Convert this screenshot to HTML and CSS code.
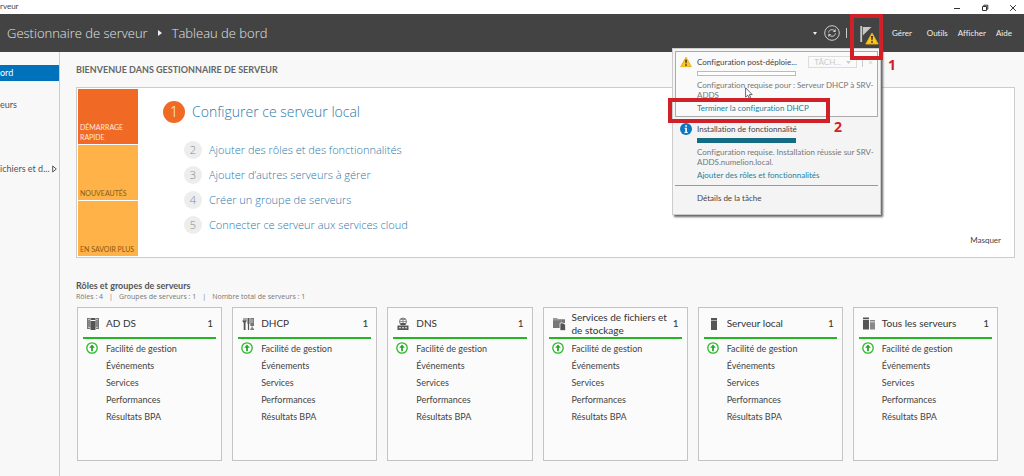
FILE: index.html
```
<!DOCTYPE html>
<html lang="fr">
<head>
<meta charset="utf-8">
<title>Gestionnaire de serveur</title>
<link rel="stylesheet" href="styles.css">
</head>
<body>
<svg class="defs" aria-hidden="true">
  <symbol id="warning" viewBox="0 0 14 13"><path d="M7 1 13.2 12H.8Z" fill="#fdc921" stroke="#e3a712" stroke-linejoin="round"/><path d="M6.1 4h1.8l-.4 4.3h-1zM6.2 9.2h1.6v1.6H6.2z" fill="#222"/></symbol>
  <symbol id="up" viewBox="0 0 12 12"><circle cx="6" cy="6" r="5.2" fill="#fff" stroke="#27b827" stroke-width="1.3"/><path d="M6 2.6 8.9 5.8H6.9V9.3H5.1V5.8H3.1Z" fill="#27a827"/></symbol>
</svg>
<div class="titlebar">
  <span class="titlebar-text">rveur</span>
  <div class="window-buttons">
    <button aria-label="Réduire"><svg viewBox="0 0 8 8"><path d="M1 4.5h6"/></svg></button>
    <button aria-label="Restaurer"><svg viewBox="0 0 8 8"><path d="M1.5 2.5h4v4h-4zM2.8 2.2V1.2h4v4H5.8"/></svg></button>
    <button aria-label="Fermer"><svg viewBox="0 0 8 8"><path d="m1.2 1.2 5.6 5.6m0-5.6L1.2 6.8"/></svg></button>
  </div>
</div>
<header class="header">
  <h1 class="crumbs"><span>Gestionnaire de serveur</span><svg class="crumb-arrow" viewBox="0 0 4 6"><path d="M0 0 4 3 0 6Z"/></svg><span>Tableau de bord</span></h1>
  <div class="tools">
    <svg class="caret" viewBox="0 0 4 3"><path d="M0 0h4L2 3Z"/></svg>
    <button class="refresh" aria-label="Actualiser"><svg viewBox="0 0 16 16"><circle cx="8" cy="8" r="7.3"/><path d="M4.6 7.6C4.8 5.6 6.2 4.7 8 4.7c1.2 0 2 .4 2.7 1.2M11.4 8.4c-.2 2-1.6 2.9-3.4 2.9-1.2 0-2-.4-2.7-1.2"/><path class="heads" d="M11.7 3.8v3.1H8.8zM4.3 12.2V9.1h2.9z"/></svg></button>
    <span class="separator"></span>
    <button class="flag" aria-label="Notifications"><svg class="flag-icon" viewBox="0 0 12 16"><path d="M.3 0h1.8v16H.3z"/><path d="M2.8 1h8.700L2.800 9.500Z"/></svg><svg class="flag-warning"><use href="#warning"/></svg></button>
  </div>
  <nav class="menu"><button>Gérer</button><button>Outils</button><button>Afficher</button><button>Aide</button></nav>

  <section class="popup" aria-label="Notifications">
    <div class="task task-current">
      <svg class="task-icon" viewBox="0 0 14 13"><use href="#warning"/></svg>
      <div class="task-body">
        <div class="task-head"><h2>Configuration post-déploie...</h2>
          <div class="task-actions"><button class="task-menu" disabled>TÂCH...<svg viewBox="0 0 5 3"><path d="M0 0h5L2.500 3Z"/></svg></button><span class="task-sep"></span><button class="task-close" disabled aria-label="Fermer">×</button></div>
        </div>
        <div class="bar"></div>
        <p>Configuration requise pour : Serveur DHCP à SRV-<br>ADDS</p>
        <a href="#">Terminer la configuration DHCP</a>
      </div>
    </div>
    <div class="task task-done">
      <svg class="task-icon" viewBox="0 0 12 12"><circle cx="6" cy="6" r="6" fill="#0a78c4"/><path d="M5.200 2.200h1.700v1.600H5.200zM4.600 4.800h2.300v4.200h.8v.9H4.500V9h.8V5.700h-.7z" fill="#fff"/></svg>
      <div class="task-body">
        <h2>Installation de fonctionnalité</h2>
        <div class="bar bar-full"></div>
        <p>Configuration requise. Installation réussie sur SRV-<br>ADDS.numelion.local.</p>
        <a href="#">Ajouter des rôles et fonctionnalités</a>
      </div>
    </div>
    <button class="details">Détails de la tâche</button>
    <svg class="cursor" viewBox="0 0 8 12"><path d="M.6.8v9.400l2.200-2 1.400 3.100 1.500-.7-1.400-3h2.900z" fill="#fff" stroke="#444" stroke-width=".8"/></svg>
    <div class="callout callout-link"></div>
    <strong class="step step-link">2</strong>
  </section>
  <div class="callout callout-flag"></div>
  <strong class="step step-flag">1</strong>
</header>
<div class="layout">
  <aside class="sidebar">
    <a class="side-link selected" href="#">ord</a>
    <a class="side-link" href="#">eurs</a>
    <a class="side-link side-files" href="#">ichiers et d...<svg viewBox="0 0 5 8"><path d="M.7 1 4.300 4 .7 7Z"/></svg></a>
  </aside>
  <main class="main">
    <h2 class="welcome">BIENVENUE DANS GESTIONNAIRE DE SERVEUR</h2>
    <section class="banner">
      <div class="tiles"><button class="tile tile-active">DÉMARRAGE RAPIDE</button><button class="tile">NOUVEAUTÉS</button><button class="tile">EN SAVOIR PLUS</button></div>
      <div class="steps">
        <a class="primary" href="#"><span class="number">1</span>Configurer ce serveur local</a>
        <a class="secondary" href="#"><span class="number">2</span>Ajouter des rôles et des fonctionnalités</a>
        <a class="secondary" href="#"><span class="number">3</span>Ajouter d’autres serveurs à gérer</a>
        <a class="secondary" href="#"><span class="number">4</span>Créer un groupe de serveurs</a>
        <a class="secondary" href="#"><span class="number">5</span>Connecter ce serveur aux services cloud</a>
      </div>
      <button class="hide">Masquer</button>
    </section>
    <h2 class="groups-title">Rôles et groupes de serveurs</h2>
    <p class="groups-info"><span>Rôles : 4</span><span>|</span><span>Groupes de serveurs : 1</span><span>|</span><span>Nombre total de serveurs : 1</span></p>
    <div class="cards">
      <article class="card"><header class="card-head"><svg viewBox="0 0 14 14"><path d="M1 1h3v1H2v9h2v1H1zM13 1h-3v1h2v9h-2v1h3z" fill="#777"/><path d="M2 2.500h2.500v8H2zM9.500 2.500H12v8H9.500z" fill="#888"/><path d="M4.500 1h5v2h-5zM4.500 4h5v9h-5z"/></svg><h3>AD DS</h3><span>1</span></header>
        <ul><li class="ok"><svg><use href="#up"/></svg>Facilité de gestion</li><li>Événements</li><li>Services</li><li>Performances</li><li>Résultats BPA</li></ul></article>
      <article class="card"><header class="card-head"><svg viewBox="0 0 14 14"><path d="M1.500 1v2.500h1V1h1v2.500h1V1h1v3.500l-1 1.200V13H2.700V5.700L1.500 4.500zM6.500 1h2v6h-.4v6H6.900V7h-.4z"/><path d="M9.300 1H13v8H9.300zM10.500 9.500h1.300v2H13V13H9.300v-1.500h1.200z" fill="#777"/><path d="M10 3h2.300M10 5h2.300" stroke="#fff" stroke-width=".6"/></svg><h3>DHCP</h3><span>1</span></header>
        <ul><li class="ok"><svg><use href="#up"/></svg>Facilité de gestion</li><li>Événements</li><li>Services</li><li>Performances</li><li>Résultats BPA</li></ul></article>
      <article class="card"><header class="card-head"><svg viewBox="0 0 14 14"><circle cx="7" cy="4.500" r="3.500" fill="none" stroke="#777"/><path d="M3.500 4.500h7M7 1v7M4.500 2.500h5" stroke="#777" stroke-width=".8"/><path d="M4.500 6h5v2h-5zM1.500 8.500h11V13h-11z"/><path d="M3 10.800h2m1 0h2m1 0h2" stroke="#eee" stroke-width="1.100"/></svg><h3>DNS</h3><span>1</span></header>
        <ul><li class="ok"><svg><use href="#up"/></svg>Facilité de gestion</li><li>Événements</li><li>Services</li><li>Performances</li><li>Résultats BPA</li></ul></article>
      <article class="card"><header class="card-head"><svg viewBox="0 0 14 14"><path d="M1 1h4l1 1h7v4H1z" fill="#999"/><path d="M1 3.500h8V11H1zM9.500 3h3.500v3H9.500z" fill="#777"/><path d="M8 6h3.500L13.500 8v5.500H8z" stroke="#fff" stroke-width=".7"/></svg><h3>Services de fichiers et de stockage</h3><span>1</span></header>
        <ul><li class="ok"><svg><use href="#up"/></svg>Facilité de gestion</li><li>Événements</li><li>Services</li><li>Performances</li><li>Résultats BPA</li></ul></article>
      <article class="card"><header class="card-head"><svg viewBox="0 0 14 14"><path d="M4 1h6v2H4zM4 4h6v9H4z"/><path d="M4 3h6v1H4z" fill="#aaa"/></svg><h3>Serveur local</h3><span>1</span></header>
        <ul><li class="ok"><svg><use href="#up"/></svg>Facilité de gestion</li><li>Événements</li><li>Services</li><li>Performances</li><li>Résultats BPA</li></ul></article>
      <article class="card"><header class="card-head"><svg viewBox="0 0 14 14"><path d="M1 .500h6v1.800H1zM1 3h6v9.500H1z"/><path d="M8 3h5v1.500H8zM8 5.200h5v7.300H8z" fill="#888"/></svg><h3>Tous les serveurs</h3><span>1</span></header>
        <ul><li class="ok"><svg><use href="#up"/></svg>Facilité de gestion</li><li>Événements</li><li>Services</li><li>Performances</li><li>Résultats BPA</li></ul></article>
    </div>
  </main>
</div>
</body>
</html>
```

FILE: styles.css
```
* { box-sizing: border-box; }
body { margin: 0; min-height: 100vh; display: flex; flex-direction: column; background: #f8f8f8; color: #444; font-family: Lato, "Open Sans", sans-serif; font-size: 8px; line-height: 12px; font-variant-ligatures: none; }
h1, h2, h3, p, ul { margin: 0; padding: 0; font-size: inherit; font-weight: 400; }
ul { list-style: none; }
button { border: 0; padding: 0; background: none; color: inherit; font: inherit; }
a { color: #1c7f9c; text-decoration: none; }
svg { display: block; flex: none; }
.defs { position: absolute; width: 0; height: 0; }

.titlebar { display: flex; justify-content: space-between; height: 14px; background: #fff; }
.window-buttons { display: flex; gap: 20px; padding: 2px 7px 0 0; }
.window-buttons svg { width: 8px; height: 8px; fill: none; stroke: #333; stroke-width: 1; }

.header { position: relative; display: flex; align-items: center; height: 38px; padding: 0 12px 0 7px; background: #434343; color: #f0f0f0; }
.crumbs { display: flex; align-items: center; flex: 1; gap: 10px; font-family: "Open Sans", "Noto Sans", sans-serif; font-size: 13px; font-weight: 300; line-height: 20px; color: #e4e4e4; }
.crumb-arrow { width: 4px; height: 6px; fill: #eee; }
.tools { display: flex; align-items: center; }
.caret { width: 4px; height: 3px; margin-right: 7px; fill: #eee; }
.refresh svg { width: 16px; height: 16px; fill: none; stroke: #ccc; }
.refresh .heads { fill: #ccc; stroke: none; }
.separator { width: 1px; height: 10px; margin: 0 13px 0 6px; background: #ccc; }
.flag { display: block; position: relative; width: 19px; height: 22px; margin-top: 2px; }
.flag-icon { width: 12px; height: 16px; fill: #c8c8c8; }
.flag-warning { position: absolute; right: 0; bottom: 0; width: 14px; height: 13px; }
.menu { display: flex; gap: 10px; margin-left: 13px; }
.menu button:first-child { margin-right: 5px; }

.popup { position: absolute; z-index: 1; top: 34px; right: 143px; width: 209px; padding: 2px 2px 10px; border: 1px solid #ccc; background: #f4f4f4; color: #444; box-shadow: 2px 2px 2px #666; }
.task { display: flex; gap: 5px; padding: 4px 5px; }
.task-current { padding: 4px 4px 2px; border: 1px solid #aaa; background: #fafafa; }
.task-done { padding: 6px 5px 4px; border-bottom: 1px solid #999; }
.task-icon { width: 12px; height: 12px; }
.task-body { flex: 1; min-width: 0; }
.task-body p { margin: 4px 0 2px; line-height: 10px; color: #777; white-space: nowrap; }
.task-body a { display: block; }
.task-current h2 { white-space: nowrap; }
.task-head { display: flex; justify-content: space-between; }
.task-actions { display: flex; align-items: center; gap: 5px; color: #ccc; }
.task-menu { display: flex; align-items: center; justify-content: space-between; width: 49px; height: 12px; padding: 0 5px; border: 1px solid #ddd; }
.task-menu svg { width: 5px; height: 3px; fill: #ccc; }
.task-sep { width: 1px; height: 10px; background: #ccc; }
.bar { width: 99px; height: 5px; margin-top: 3px; border: 1px solid #bbb; background: #fff; }
.bar-full { border-color: #146c84; background: #146c84; }
.details { display: block; margin: 6px 0 0 22px; }
.cursor { position: absolute; top: 38px; left: 72px; width: 8px; height: 12px; }
.callout { position: absolute; z-index: 2; border: 4px solid #d02028; }
.callout-link { top: 49px; left: -5px; width: 162px; height: 25px; }
.callout-flag { top: 0; right: 141px; width: 33px; height: 46px; }
.step { position: absolute; z-index: 2; color: #d02028; font-family: "Open Sans", "Noto Sans", sans-serif; font-size: 14px; font-weight: 700; line-height: 16px; }
.step-link { top: 70px; left: 161px; }
.step-flag { top: 43px; right: 128px; }

.layout { display: flex; flex: 1; }
.sidebar { width: 60px; flex: none; padding-top: 13px; border-right: 1px solid #ccc; }
.side-link { display: flex; align-items: center; justify-content: space-between; height: 16px; margin-bottom: 16px; color: #555; font-size: 9px; }
.selected { background: #0072bc; color: #fff; }
.side-files { margin-top: 48px; padding-right: 2px; white-space: nowrap; }
.side-files svg { width: 5px; height: 8px; fill: none; stroke: #555; }

.main { flex: 1; min-width: 0; padding: 12px 9px 14px 16px; }
.welcome { color: #666; font-size: 9px; font-weight: 700; }
.banner { display: flex; margin-top: 11px; padding: 1px; border: 1px solid #ccc; background: #fff; }
.tiles { display: grid; grid-template: repeat(3, 55px) / 60px; gap: 1px; }
.tile { display: flex; align-items: flex-end; padding: 0 2px 2px; background: #ffb247; color: #8a5a14; font-size: 7px; line-height: 10px; text-align: left; white-space: nowrap; }
.tile-active { background: #f06a26; color: #ffe9dc; white-space: normal; }
.steps { flex: 1; padding: 12px 0 0 25px; font-family: "Open Sans", "Noto Sans", sans-serif; font-weight: 300; }
.steps a { display: flex; align-items: center; color: #2c78aa; }
.number { display: flex; align-items: center; justify-content: center; border-radius: 50%; }
.primary { gap: 7px; margin-bottom: 18px; font-size: 14px; line-height: 22px; }
.primary .number { width: 22px; height: 22px; background: #f06a26; color: #fff; }
.secondary { gap: 7px; height: 18px; margin: 0 0 7px 21px; font-size: 11px; }
.secondary:last-child { margin-bottom: 0; }
.secondary .number { width: 18px; height: 18px; background: #ededed; color: #888; }
.hide { align-self: flex-end; margin: 0 12px 10px 0; }

.groups-title { margin-top: 22px; color: #555; font-size: 9px; font-weight: 700; }
.groups-info { display: flex; gap: 6px; color: #777; font-family: "Open Sans", "Noto Sans", sans-serif; font-size: 7px; line-height: 10px; }
.cards { display: grid; grid-template-columns: repeat(6, 1fr); gap: 10px; margin: 5px 17px 0 1px; }
.card { min-height: 154px; padding: 2px 5px; border: 1px solid #c4c4c4; background: #fbfbfb; }
.card-head { display: flex; align-items: center; height: 29px; padding: 0 3px; border-bottom: 2px solid #22b822; font-size: 10px; line-height: 13px; color: #333; }
.card-head svg { width: 14px; height: 14px; margin-right: 6px; fill: #555; }
.card-head h3 { flex: 1; }
.card li { height: 17px; padding-left: 23px; font-size: 9px; line-height: 17px; white-space: nowrap; }
.card .ok { display: flex; align-items: center; gap: 8px; height: 18px; padding-left: 3px; }
.card .ok svg { width: 12px; height: 12px; }
```
